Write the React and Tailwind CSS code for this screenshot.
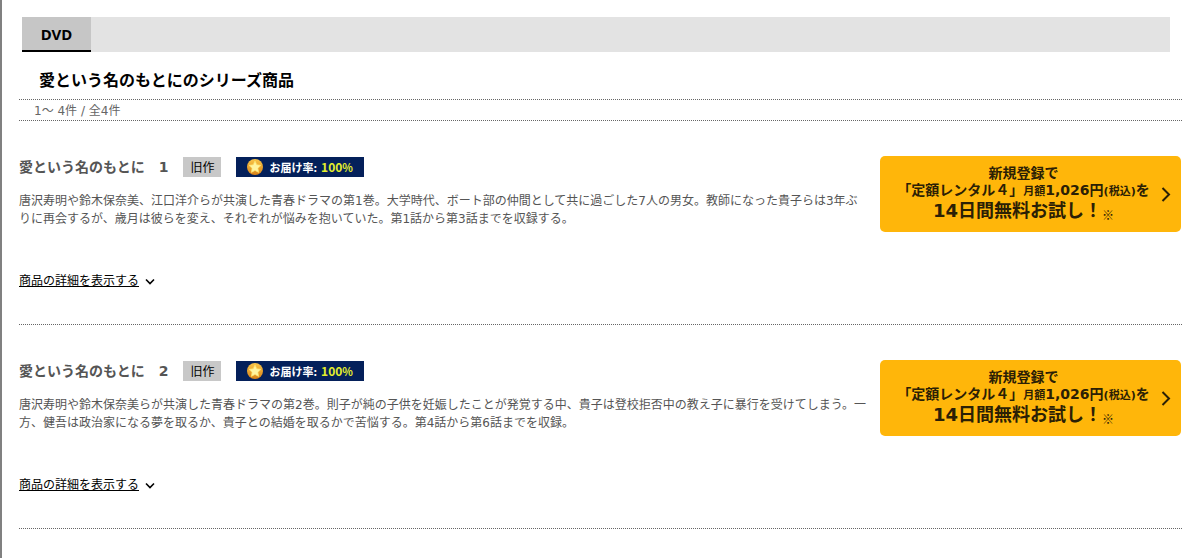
import React from 'react';

const items = [
  {
    title: '愛という名のもとに　1',
    description:
      '唐沢寿明や鈴木保奈美、江口洋介らが共演した青春ドラマの第1巻。大学時代、ボート部の仲間として共に過ごした7人の男女。教師になった貴子らは3年ぶりに再会するが、歳月は彼らを変え、それぞれが悩みを抱いていた。第1話から第3話までを収録する。',
  },
  {
    title: '愛という名のもとに　2',
    description:
      '唐沢寿明や鈴木保奈美らが共演した青春ドラマの第2巻。則子が純の子供を妊娠したことが発覚する中、貴子は登校拒否中の教え子に暴行を受けてしまう。一方、健吾は政治家になる夢を取るか、貴子との結婚を取るかで苦悩する。第4話から第6話までを収録。',
  },
];

function StarCoin() {
  return (
    <svg className="h-4 w-4" viewBox="0 0 18 18" aria-hidden="true">
      <defs>
        <linearGradient id="coin" x1="0" y1="0" x2="0" y2="1">
          <stop offset="0" stopColor="#f9c64a" />
          <stop offset="1" stopColor="#d98216" />
        </linearGradient>
      </defs>
      <circle cx="9" cy="9" r="9" fill="url(#coin)" />
      <path
        d="M9 2.2l2 4.3 4.7.6-3.4 3.3.8 4.7L9 12.8l-4.1 2.3.8-4.7L2.3 7.1 7 6.5z"
        fill="#fff3a0"
        stroke="#fde36a"
        strokeWidth="0.8"
        strokeLinejoin="round"
      />
    </svg>
  );
}

function DeliveryRate() {
  return (
    <div className="flex h-5 w-32 items-center bg-[#04205a] pl-[11px] font-['Noto_Sans_CJK_JP',sans-serif] text-[11px] leading-5 font-bold text-white">
      <StarCoin />
      <span className="ml-1.5">お届け率:</span>
      <span className="ml-1 text-[12px] text-[#e3ee2c]">
        100<span className="text-[11px]">%</span>
      </span>
    </div>
  );
}

function TrialLink() {
  return (
    <a
      href="#trial"
      className="flex w-[301px] shrink-0 items-center rounded-[5px] bg-[#ffb60a] pt-[9px] pr-[7px] pb-[10px] pl-[9px] font-bold text-[#2b2005]"
    >
      <span className="flex-1 text-center text-[14px] leading-[17px] whitespace-nowrap">
        <span className="block">新規登録で</span>
        <span className="block">
          「定額レンタル４」<span className="text-[11px]">月額</span>1,026円
          <span className="text-[11px]">(税込)</span>を
        </span>
        <span className="block h-[22px] text-[18px] leading-[22px]">
          14日間無料お試し！
          <sub className="font-['Noto_Sans_CJK_JP',sans-serif] text-[12px] font-normal">※</sub>
        </span>
      </span>
      <svg className="h-4 w-4" viewBox="0 0 16 16" fill="none" stroke="currentColor" strokeWidth="2" aria-hidden="true">
        <path d="M4.5 2l6.5 6.5-6.5 6.5" />
      </svg>
    </a>
  );
}

function SeriesItem({ title, description }) {
  return (
    <article className="border-b border-dotted border-[#666] pt-[35px] pb-[34px]">
      <div className="flex items-start gap-3 pr-px">
        <div className="flex-1">
          <div className="flex h-[22px] items-center">
            <h3 className="text-[14px] leading-5 font-bold text-[#555]">{title}</h3>
            <span className="ml-[15px] w-[38px] bg-[#c8c8c8] text-center font-['Noto_Sans_CJK_JP',sans-serif] text-[12px] leading-5 text-black">
              旧作
            </span>
            <div className="ml-[15px]">
              <DeliveryRate />
            </div>
          </div>
          <p className="mt-[14px] text-[12px] leading-[18px] text-[#555]">{description}</p>
          <button type="button" className="mt-[44px] flex items-center gap-[5px] text-[12px] leading-[18px] text-black">
            <span className="underline">商品の詳細を表示する</span>
            <svg className="h-3 w-3" viewBox="0 0 12 12" fill="none" stroke="currentColor" strokeWidth="1.6" aria-hidden="true">
              <path d="M2 4.5l4 4 4-4" />
            </svg>
          </button>
        </div>
        <TrialLink />
      </div>
    </article>
  );
}

function App() {
  return (
    <main className="min-h-screen border-l-2 border-[#808080] bg-white pt-[17px] pr-4 pl-[17px] font-['DejaVu_Sans','Noto_Sans_CJK_JP',sans-serif]">
      {/* Format tabs */}
      <nav className="mr-3 ml-[3px] bg-[#e3e3e3]">
        <a
          href="#dvd"
          className="block w-[69px] border-b-2 border-black bg-[#c6c6c6] pt-px text-center font-['Noto_Sans',sans-serif] text-[15px] leading-8 font-bold text-black"
        >
          DVD
        </a>
      </nav>

      {/* Series heading */}
      <h2 className="mt-[17px] pl-5 text-[16px] leading-6 font-bold text-black">愛という名のもとにのシリーズ商品</h2>
      <p className="mt-[6px] border-y border-dotted border-[#666] pt-[2px] pl-[15px] text-[12px] leading-[18px] text-[#666]">
        1～ 4件 / 全4件
      </p>

      {items.map((item) => (
        <SeriesItem key={item.title} {...item} />
      ))}
    </main>
  );
}

export default App;
